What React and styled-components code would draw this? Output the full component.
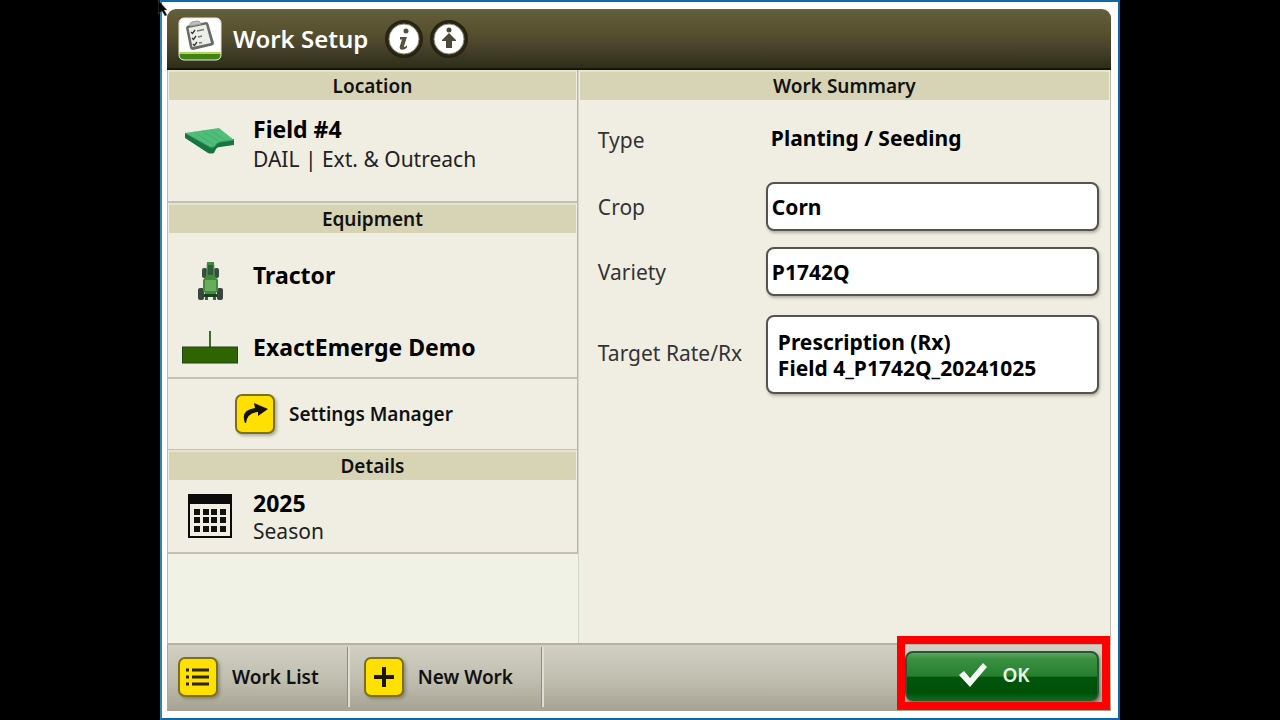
import React from "react";
import styled, { createGlobalStyle } from "styled-components";

const GlobalStyle = createGlobalStyle`
  * { box-sizing: border-box; }
  body {
    margin: 0;
    background: #000;
    color: #111;
    font-family: "Noto Sans", "Open Sans", sans-serif;
  }
  button, input, textarea { font: inherit; color: inherit; }
  button { cursor: pointer; }
  h1, h2 { margin: 0; }
`;

const Frame = styled.main`
  position: relative;
  display: flex;
  width: 75%;
  min-height: 100vh;
  margin: 0 auto;
  padding: 7px 7px 7px 5px;
  background: #fff;
  border: 2px solid #0f68ab;
  border-left-color: #2c86b0;
`;

const Pointer = styled.svg`
  position: absolute;
  top: -2px;
  left: -4px;
  width: 10px;
  height: 16px;
`;

const Panel = styled.div`
  flex: 1;
  display: flex;
  flex-direction: column;
  border-radius: 9px 9px 0 0;
  overflow: hidden;
`;

const TitleBar = styled.header`
  display: flex;
  align-items: center;
  height: 61px;
  padding: 0 11px;
  background: linear-gradient(#5e6550 0, #625c39 5%, #57502f 40%, #48422b 65%, #30301a 96%);
  border-bottom: 2px solid #15150a;
`;

const AppBadge = styled.svg`
  width: 44px;
  height: 44px;
`;

const Title = styled.h1`
  margin: 0 16px 0 11px;
  color: #fff;
  font-size: 24px;
  font-weight: 600;
  line-height: 32px;
`;

const RoundButton = styled.button`
  width: 40px;
  height: 40px;
  margin-right: 5px;
  padding: 0;
  background: none;
  border: 0;
  svg { display: block; }
`;

const Columns = styled.div`
  flex: 1;
  display: grid;
  grid-template-columns: 41fr 53fr;
  background: #f0eee2;
  border: 1px solid #bdbbaa;
  border-width: 0 1px;
`;

const SideColumn = styled.div`
  display: flex;
  flex-direction: column;
  background: #f1f2e6;
  border-right: 1px solid #d5d4c8;
`;

const Section = styled.section`
  background: #f0eee2;
  border-bottom: ${(p) => (p.$last ? "1px" : "2px")} solid #c3c2b2;
  border-right: 1px solid #b5b4a6;
`;

const Heading = styled.h2`
  margin: 0 1px;
  border-top: 2px solid #e7e4cd;
  background: #d7d3b5;
  font-size: 19px;
  font-weight: 600;
  line-height: 28px;
  text-align: center;
`;

const ItemRow = styled.button`
  display: grid;
  grid-template-columns: 84px 1fr;
  column-gap: 1px;
  align-items: ${(p) => (p.$top ? "start" : "center")};
  width: 100%;
  height: ${(p) => p.$height}px;
  padding: ${(p) => (p.$top ? "14px" : "0")} 0 0;
  background: none;
  border: 0;
  text-align: left;
`;

const ItemIcon = styled.svg`
  justify-self: center;
  margin-top: ${(p) => p.$drop || 0}px;
`;

const ItemName = styled.strong`
  display: block;
  color: #000;
  font-size: 23px;
  font-weight: 700;
  line-height: 30px;
`;

const ItemNote = styled.span`
  display: block;
  color: #222;
  font-size: 21px;
  line-height: ${(p) => (p.$tight ? "26px" : "30px")};
`;

const IconButton = styled.button`
  display: flex;
  align-items: center;
  gap: 14px;
  height: ${(p) => p.$height}px;
  padding: 0 ${(p) => p.$end}px 0 ${(p) => p.$start}px;
  background: none;
  border: 0;
  font-size: 19px;
  font-weight: 600;
  white-space: nowrap;
`;

const KeyCap = styled.span`
  display: flex;
  align-items: center;
  justify-content: center;
  width: 40px;
  height: 40px;
  background: #ffe000;
  border: 2px solid #7d701d;
  border-radius: 7px;
  box-shadow: 2px 2px 3px rgba(60, 60, 40, 0.35);
`;

const Form = styled.form`
  display: grid;
  grid-template-columns: 168px 1fr;
  row-gap: 16px;
  align-items: center;
  padding: 14px 11px 0 19px;
`;

const Label = styled.label`
  color: #333;
  font-size: 21px;
  line-height: 28px;
`;

const TypeValue = styled.output`
  display: flex;
  align-items: center;
  height: 52px;
  padding: 0 0 4px 5px;
  color: #000;
  font-size: 21px;
  font-weight: 700;
`;

const Field = styled.input`
  width: 100%;
  height: 49px;
  padding: 0 4px;
  background: #fff;
  border: 2px solid #55534f;
  border-radius: 8px;
  box-shadow: 1px 2px 3px rgba(60, 60, 40, 0.35);
  color: #000;
  font-size: 21px;
  font-weight: 700;
`;

const RateField = styled(Field).attrs({ as: "textarea" })`
  display: block;
  height: 79px;
  margin-top: 3px;
  padding: 12px 10px;
  line-height: 26px;
  resize: none;
  overflow: hidden;
`;

const Footer = styled.footer`
  display: flex;
  align-items: center;
  height: 68px;
  padding-bottom: 2px;
  background: linear-gradient(#d2d0c4, #bfbdae 55%, #a5a293);
  border-top: 2px solid #b4b2a5;
  border-left: 1px solid #aaa898;
`;

const Divided = styled.div`
  display: flex;
  align-items: center;
  height: 60px;
  border-right: 1px solid #8f8d82;
  box-shadow: 2px 0 0 #e0ded3;
`;

const Confirm = styled.div`
  position: relative;
  width: 197px;
  margin: 0 9px 2px auto;
`;

const Highlight = styled.div`
  position: absolute;
  inset: -15px -8px -8px;
  border: 8px solid #f00;
  pointer-events: none;
`;

const OkButton = styled.button`
  display: flex;
  align-items: center;
  justify-content: center;
  gap: 14px;
  width: 194px;
  height: 50px;
  margin-bottom: 1px;
  padding: 0 16px 2px 0;
  background: linear-gradient(#5fa563 0, #3b9042 12%, #267f2e 50%, #00560b 53%, #004f0a 85%, #086817 100%);
  border: 2px solid #215a30;
  border-radius: 8px;
  box-shadow: 1px 2px 3px rgba(40, 50, 40, 0.5);
  color: #e9f5e6;
  font-size: 19px;
  font-weight: 600;
`;

function ClipboardBadge() {
  return (
    <AppBadge viewBox="0 0 44 44" aria-hidden="true">
      <defs>
        <clipPath id="badge"><rect x="1" y="1" width="42" height="42" rx="5" /></clipPath>
      </defs>
      <g clipPath="url(#badge)">
        <rect width="44" height="44" fill="#fff" />
        <rect y="35" width="44" height="2" fill="#b1d957" />
        <rect y="37" width="44" height="7" fill="#438313" />
      </g>
      <rect x="1" y="1" width="42" height="42" rx="5" fill="none" stroke="#e6e8db" />
      <path d="M8 11q0-2 2-2.500L28 5q2 0 2.500 2L36 26q0 2-2 2.500L15 33q-2 0-3-2Z" fill="#686b66" />
      <path d="M10.500 11 28 7.500 33 26 14.500 30Z" fill="#eceeea" />
      <path d="M12 9q-1-3 2-4l5-1q3-.5 4 3Z" fill="#bdc1bb" stroke="#9a9f98" />
      <path d="m13 15 1.500 1.500L17 13m-3 8 1.500 1.500L18 19m-3 8 1.500 1.500L19 25" fill="none" stroke="#323630" strokeWidth="1.300" />
      <path d="m19 14 7-1.500m-6 7.500 4-1m-3 7 3-.5" stroke="#757a74" strokeWidth="1.300" />
    </AppBadge>
  );
}

function Disc({ children }) {
  return (
    <svg width="40" height="40" viewBox="0 0 40 40" aria-hidden="true">
      <circle cx="20" cy="20" r="18" fill="#2b2918" stroke="#252314" strokeWidth="2" />
      <circle cx="20" cy="20" r="15" fill="#fff" stroke="#8d8a77" />
      {children}
    </svg>
  );
}

function FieldIcon() {
  return (
    <ItemIcon $drop={13} width="50" height="28" viewBox="0 0 50 28" aria-hidden="true">
      <path d="M0 6v5l23 15q3 1 6 0l2-4q1-2 4-2l14-2v-6l-20 2Z" fill="#1a7440" />
      <path d="M0 6 34 1l15 12-14 2q-4 1-5 4-2 2-5 1Z" fill="#51bd7a" />
      <path d="m9 5 20 13M17 4l18 11M25 3l16 11" stroke="#45ae6e" strokeWidth="1" />
      <path d="m0 6 25 14q3 1 5-1 1-3 5-4l14-2" fill="none" stroke="#3d9c62" />
    </ItemIcon>
  );
}

function TractorIcon() {
  return (
    <ItemIcon $drop={11} width="28" height="40" viewBox="0 0 28 40" aria-hidden="true">
      <rect x="6" y="7" width="5" height="10" rx="2" fill="#3e4b43" />
      <rect x="18" y="7" width="5" height="10" rx="2" fill="#3e4b43" />
      <rect x="2" y="27" width="6" height="12" rx="2" fill="#3c443f" />
      <rect x="9" y="28" width="3" height="11" fill="#4b554d" />
      <rect x="17" y="28" width="3" height="11" fill="#4b554d" />
      <rect x="21" y="27" width="6" height="12" rx="2" fill="#3c443f" />
      <path d="M11 1h7l1 14 3 4v11l-3 3h-9l-3-3V19l3-4Z" fill="#438b3c" />
      <path d="M12 4h5v10h-5Z" fill="#315a3d" />
      <path d="M9 19h11v11H9Z" fill="#68ad5b" />
      <path d="M8 33h13v3H8Z" fill="#17411f" />
    </ItemIcon>
  );
}

function PlanterIcon() {
  return (
    <ItemIcon width="56" height="34" viewBox="0 0 56 34" aria-hidden="true">
      <path d="M28 1v17" stroke="#3d6c2e" strokeWidth="2" />
      <rect x=".5" y="17" width="55" height="16" fill="#2f6500" stroke="#234318" />
    </ItemIcon>
  );
}

function CalendarIcon() {
  return (
    <ItemIcon width="44" height="44" viewBox="0 0 44 44" aria-hidden="true">
      <path fill="#0b0b09" fillRule="evenodd" d="M0 0h44v44H0Zm2 10v32h40V10Z" />
      <g fill="#11110e">
        {[15, 23, 32].map((y) =>
          [6, 15, 23, 32].map((x) => <rect key={`${x}-${y}`} x={x} y={y} width="6" height="6" />)
        )}
      </g>
    </ItemIcon>
  );
}

export default function App() {
  return (
    <>
      <GlobalStyle />
      <Frame>
        <Panel>
          <TitleBar>
            <ClipboardBadge />
            <Title>Work Setup</Title>
            <RoundButton type="button" aria-label="Information">
              <Disc>
                <circle cx="22" cy="12" r="2.500" fill="#55533f" />
                <path d="M16 18h7l-3 9q0 2 3-.5v2q-3 3-6 2-2-1-1-4l2-6h-2Z" fill="#55533f" />
              </Disc>
            </RoundButton>
            <RoundButton type="button" aria-label="Move up">
              <Disc>
                <circle cx="20" cy="11" r="2.500" fill="#4b4937" />
                <path d="m20 14 7 7v1h-4v7h-6v-7h-4v-1Z" fill="#4b4937" />
              </Disc>
            </RoundButton>
          </TitleBar>

          <Columns>
            <SideColumn>
              <Section>
                <Heading>Location</Heading>
                <ItemRow type="button" $height={101} $top>
                  <FieldIcon />
                  <span>
                    <ItemName>Field #4</ItemName>
                    <ItemNote>DAIL | Ext. &amp; Outreach</ItemNote>
                  </span>
                </ItemRow>
              </Section>
              <Section>
                <Heading>Equipment</Heading>
                <ItemRow type="button" $height={84}>
                  <TractorIcon />
                  <ItemName>Tractor</ItemName>
                </ItemRow>
                <ItemRow type="button" $height={60}>
                  <PlanterIcon />
                  <ItemName>ExactEmerge Demo</ItemName>
                </ItemRow>
              </Section>
              <Section $last>
                <IconButton type="button" $height={70} $start={67} $end={10}>
                  <KeyCap>
                    <svg width="28" height="24" viewBox="0 0 28 24" aria-hidden="true">
                      <path d="M4 21Q-1 8 14 6L13 1l14 6-10 7v-4Q6 11 5 21Z" fill="#161203" />
                    </svg>
                  </KeyCap>
                  Settings Manager
                </IconButton>
              </Section>
              <Section>
                <Heading>Details</Heading>
                <ItemRow type="button" $height={72}>
                  <CalendarIcon />
                  <span>
                    <ItemName>2025</ItemName>
                    <ItemNote $tight>Season</ItemNote>
                  </span>
                </ItemRow>
              </Section>
            </SideColumn>

            <section>
              <Heading>Work Summary</Heading>
              <Form>
                <Label htmlFor="type">Type</Label>
                <TypeValue id="type">Planting / Seeding</TypeValue>
                <Label htmlFor="crop">Crop</Label>
                <Field id="crop" defaultValue="Corn" />
                <Label htmlFor="variety">Variety</Label>
                <Field id="variety" defaultValue="P1742Q" />
                <Label htmlFor="rate">Target Rate/Rx</Label>
                <RateField id="rate" spellCheck={false} defaultValue={"Prescription (Rx)\nField 4_P1742Q_20241025"} />
              </Form>
            </section>
          </Columns>

          <Footer>
            <Divided>
              <IconButton type="button" $height={60} $start={10} $end={28}>
                <KeyCap>
                  <svg width="24" height="20" viewBox="0 0 24 20" aria-hidden="true">
                    <path d="M6 3h17M6 10h17M6 17h17M0 3h3M0 10h3M0 17h3" stroke="#2b2400" strokeWidth="3" />
                  </svg>
                </KeyCap>
                Work List
              </IconButton>
            </Divided>
            <Divided>
              <IconButton type="button" $height={60} $start={16} $end={28}>
                <KeyCap>
                  <svg width="22" height="22" viewBox="0 0 22 22" aria-hidden="true">
                    <path d="M11 1v20M1 11h20" stroke="#1c1700" strokeWidth="4" />
                  </svg>
                </KeyCap>
                New Work
              </IconButton>
            </Divided>
            <Confirm>
              <OkButton type="button">
                <svg width="30" height="26" viewBox="0 0 30 26" aria-hidden="true">
                  <path d="m1 13 5-4 6 7L25 1l4 4-17 20Z" fill="#f5faf3" />
                </svg>
                OK
              </OkButton>
              <Highlight />
            </Confirm>
          </Footer>
        </Panel>
        <Pointer viewBox="0 0 10 16" aria-hidden="true">
          <path d="M0 0 9 10H6l3 5-2 1-3-5-4 3Z" fill="#000" stroke="#777" strokeWidth=".5" />
        </Pointer>
      </Frame>
    </>
  );
}
